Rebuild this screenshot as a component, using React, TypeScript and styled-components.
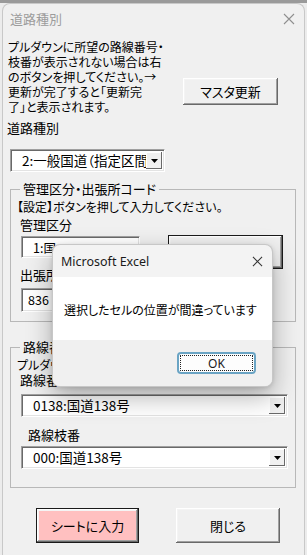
import React from "react";
import styled, { createGlobalStyle } from "styled-components";

const GlobalStyle = createGlobalStyle`
  html, body { margin: 0; padding: 0; background: #e9e9e9; }
  body {
    font-family: "Noto Sans CJK JP", "Noto Sans", sans-serif;
    font-feature-settings: "palt";
    color: #000;
  }
  * { box-sizing: border-box; }
`;

const Screen = styled.div`
  width: 307px;
  height: 555px;
  padding: 3px 2px 0;
  overflow: hidden;
  background: linear-gradient(#9a9a9a 0 3px, #ececec 3px);
`;

const Window = styled.div`
  position: relative;
  height: 552px;
  background: #f0f0f0;
  border: 1px solid #c8c8c8;
  border-bottom: none;
  border-radius: 8px 8px 0 0;
  display: flex;
  flex-direction: column;
`;

const TitleBar = styled.div`
  height: 29px;
  display: flex;
  align-items: center;
  justify-content: space-between;
  padding: 0 9px 0 7px;
`;

const TitleText = styled.span`
  font-size: 13px;
  color: #9c9c9c;
`;

const Body = styled.div`
  display: flex;
  flex-direction: column;
  padding: 6px 8px 0 4px;
`;

const TopSection = styled.div`
  display: flex;
  align-items: flex-start;
`;

const Instructions = styled.div`
  margin-left: 1px;
  width: 176px;
  font-size: 12px;
  line-height: 15px;
  white-space: nowrap;
`;

const Line = styled.span`
  display: block;
  height: 15px;
`;

const ClassicButton = styled.button<{ $w: number; $h: number; $pink?: boolean; $strong?: boolean }>`
  width: ${(p) => p.$w}px;
  height: ${(p) => p.$h}px;
  flex: none;
  padding: 0;
  font-family: "Noto Sans CJK JP", sans-serif;
  font-feature-settings: "palt";
  font-size: 13px;
  color: #000;
  background: ${(p) => (p.$pink ? "#ffc0c0" : "#f0f0f0")};
  border: ${(p) => (p.$strong ? "1px solid #1a1a1a" : "none")};
  box-shadow: inset -1px -1px 0 #696969, inset 1px 1px 0 #ffffff,
    inset -2px -2px 0 #a0a0a0, inset 2px 2px 0 #f4f4f4;
`;

const MasterButton = styled(ClassicButton)`
  margin: 39px 18px 0 auto;
`;

const FieldLabel = styled.div<{ $ml?: number; $mt?: number }>`
  font-size: 13px;
  line-height: 16px;
  margin-left: ${(p) => p.$ml ?? 0}px;
  margin-top: ${(p) => p.$mt ?? 0}px;
  white-space: nowrap;
`;

const sunken = `
  background: #ffffff;
  border-style: solid;
  border-width: 1px;
  border-color: #a0a0a0 #ffffff #ffffff #a0a0a0;
  box-shadow: inset 1px 1px 0 #696969, inset -1px -1px 0 #e3e3e3;
`;

const Combo = styled.div<{ $w: number; $ml: number; $mt: number }>`
  ${sunken}
  width: ${(p) => p.$w}px;
  height: 23px;
  margin-left: ${(p) => p.$ml}px;
  margin-top: ${(p) => p.$mt}px;
  display: flex;
  align-items: stretch;
  padding: 1px 2px 1px 0;
  flex: none;
`;

const ComboText = styled.div`
  flex: 1;
  overflow: hidden;
  white-space: nowrap;
  font-size: 13.5px;
  line-height: 19px;
  padding-left: 11px;
`;

const DropButton = styled.div`
  width: 16px;
  flex: none;
  margin: 1px 0;
  display: flex;
  align-items: center;
  justify-content: center;
  background: #f0f0f0;
  box-shadow: inset -1px -1px 0 #696969, inset 1px 1px 0 #ffffff;
`;

const TextBox = styled.div<{ $w: number; $h: number; $pl: number; $mt?: number }>`
  ${sunken}
  width: ${(p) => p.$w}px;
  height: ${(p) => p.$h}px;
  margin-left: 4px;
  margin-top: ${(p) => p.$mt ?? 0}px;
  padding: 2px 0 0 ${(p) => p.$pl}px;
  font-size: 12.5px;
  line-height: 18px;
  white-space: nowrap;
  overflow: hidden;
  flex: none;
`;

const Group = styled.fieldset<{ $mt: number; $pb: number }>`
  margin: ${(p) => p.$mt}px 0 0 3px;
  padding: 2px 8px ${(p) => p.$pb}px 6px;
  border: 1px solid #b8b8b8;
  min-width: 0;
  display: flex;
  flex-direction: column;
  align-items: flex-start;
`;

const GroupTitle = styled.legend`
  font-size: 13px;
  line-height: 16px;
  padding: 0 3px;
  margin-left: 3px;
`;

const Note = styled.div`
  font-size: 12px;
  line-height: 16px;
  white-space: nowrap;
`;

const CodeRow = styled.div`
  display: flex;
  align-items: flex-start;
  margin-top: 3px;
`;

const SetButton = styled(ClassicButton)`
  margin: -1px 0 0 28px;
`;

const ActionRow = styled.div`
  display: flex;
  margin: 20px 0 0 29px;
  gap: 37px;
`;

/* Message box (overlays the form) */
const MsgBox = styled.div`
  position: absolute;
  left: 49px;
  top: 240px;
  width: 221px;
  height: 143px;
  border-radius: 8px;
  overflow: hidden;
  border: 1px solid rgba(0, 0, 0, 0.18);
  box-shadow: 0 10px 26px rgba(0, 0, 0, 0.3), 0 1px 4px rgba(0, 0, 0, 0.12);
  display: flex;
  flex-direction: column;
  background: #f3f3f3;
`;

const MsgTitle = styled.div`
  height: 32px;
  flex: none;
  display: flex;
  align-items: center;
  justify-content: space-between;
  padding: 0 9px 0 8px;
  font-family: "Noto Sans", "Open Sans", sans-serif;
  font-size: 12.5px;
  color: #1a1a1a;
`;

const MsgBody = styled.div`
  height: 63px;
  flex: none;
  background: #ffffff;
  display: flex;
  align-items: center;
  padding: 2px 0 0 11px;
  font-size: 12px;
  white-space: nowrap;
`;

const MsgFooter = styled.div`
  flex: 1;
  display: flex;
  justify-content: flex-end;
  align-items: flex-start;
  padding: 12px 16px 0 0;
  background: #f0f0f0;
`;

const OkButton = styled.button`
  position: relative;
  width: 79px;
  height: 22px;
  padding: 0;
  border-radius: 4px;
  border: 2px solid #6aa4c4;
  background: #fdfdfd;
  font-family: "Noto Sans", "Open Sans", sans-serif;
  font-size: 12px;
  color: #1a1a1a;
  &::after {
    content: "";
    position: absolute;
    inset: 1px;
    border: 1px dotted #222;
    border-radius: 1px;
  }
`;

const CloseX = ({ color, size }: { color: string; size: number }) => (
  <svg width={size} height={size} viewBox="0 0 12 12">
    <path d="M1 1L11 11M11 1L1 11" stroke={color} strokeWidth="1.1" fill="none" />
  </svg>
);

const Arrow = () => (
  <svg width="7" height="4" viewBox="0 0 7 4">
    <path d="M0 0H7L3.5 4Z" fill="#000" />
  </svg>
);

export default function App() {
  const topLines = [
    "プルダウンに所望の路線番号・",
    "枝番が表示されない場合は右",
    "のボタンを押してください。→",
    "更新が完了すると「更新完",
    "了」と表示されます。",
  ];
  return (
    <>
      <GlobalStyle />
      <Screen>
        <Window>
          <TitleBar>
            <TitleText>道路種別</TitleText>
            <CloseX color="#8f8f8f" size={12} />
          </TitleBar>
          <Body>
            <TopSection>
              <Instructions>
                {topLines.map((l) => (
                  <Line key={l}>{l}</Line>
                ))}
              </Instructions>
              <MasterButton $w={95} $h={27}>マスタ更新</MasterButton>
            </TopSection>

            <FieldLabel $mt={6}>道路種別</FieldLabel>
            <Combo $w={155} $ml={3} $mt={13}>
              <ComboText>2:一般国道（指定区間）</ComboText>
              <DropButton>
                <Arrow />
              </DropButton>
            </Combo>

            <Group $mt={9} $pb={9}>
              <GroupTitle>管理区分・出張所コード</GroupTitle>
              <Note>【設定】ボタンを押して入力してください。</Note>
              <FieldLabel $ml={3} $mt={2}>管理区分</FieldLabel>
              <CodeRow>
                <TextBox $w={119} $h={22} $pl={11}>1:国</TextBox>
                <SetButton $w={115} $h={34} $strong>設定</SetButton>
              </CodeRow>
              <FieldLabel $ml={3} $mt={-2}>出張所コード</FieldLabel>
              <TextBox $w={119} $h={24} $pl={6} $mt={5}>836</TextBox>
            </Group>

            <Group $mt={17} $pb={18}>
              <GroupTitle>路線番号・枝番</GroupTitle>
              <Note>プルダウンから選択してください。</Note>
              <FieldLabel $ml={3} $mt={-1}>路線番号</FieldLabel>
              <Combo $w={267} $ml={4} $mt={6}>
                <ComboText>0138:国道138号</ComboText>
                <DropButton>
                  <Arrow />
                </DropButton>
              </Combo>
              <FieldLabel $ml={11} $mt={10}>路線枝番</FieldLabel>
              <Combo $w={267} $ml={4} $mt={3}>
                <ComboText>000:国道138号</ComboText>
                <DropButton>
                  <Arrow />
                </DropButton>
              </Combo>
            </Group>

            <ActionRow>
              <ClassicButton $w={103} $h={35} $pink $strong>シートに入力</ClassicButton>
              <ClassicButton $w={104} $h={35}>閉じる</ClassicButton>
            </ActionRow>
          </Body>

          <MsgBox>
            <MsgTitle>
              <span>Microsoft Excel</span>
              <CloseX color="#333" size={11} />
            </MsgTitle>
            <MsgBody>選択したセルの位置が間違っています</MsgBody>
            <MsgFooter>
              <OkButton>OK</OkButton>
            </MsgFooter>
          </MsgBox>
        </Window>
      </Screen>
    </>
  );
}
